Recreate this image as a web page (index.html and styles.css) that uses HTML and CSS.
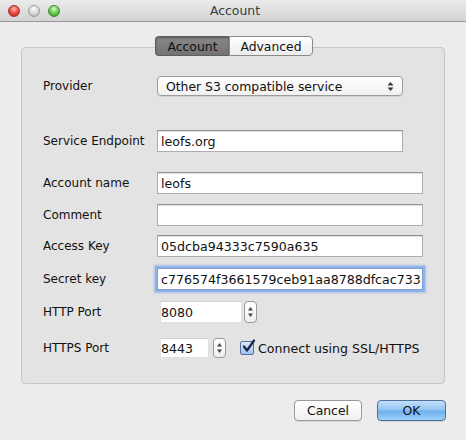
FILE: index.html
```html
<!DOCTYPE html>
<html>
<head>
<meta charset="utf-8">
<link rel="stylesheet" href="styles.css">
</head>
<body>
<div class="window">
  <div class="titlebar">
    <div class="lights">
      <span class="light red"></span>
      <span class="light gray"></span>
      <span class="light green"></span>
    </div>
    <div class="title">Account</div>
  </div>
  <div class="content">
    <div class="tabs">
      <div class="tab selected">Account</div>
      <div class="tab">Advanced</div>
    </div>
    <div class="group">
      <div class="row r-provider">
        <div class="label">Provider</div>
        <div class="popup">
          <span>Other S3 compatible service</span>
          <svg class="popup-arrows" width="7" height="11" viewBox="0 0 7 11"><path d="M3.5 1 L6.5 4.5 H0.5 Z M3.5 10 L6.5 6.5 H0.5 Z" fill="#3a3a3a"/></svg>
        </div>
      </div>
      <div class="row r-endpoint">
        <div class="label">Service Endpoint</div>
        <div class="field w246">leofs.org</div>
      </div>
      <div class="row r-account">
        <div class="label">Account name</div>
        <div class="field w266">leofs</div>
      </div>
      <div class="row r-comment">
        <div class="label">Comment</div>
        <div class="field w266"></div>
      </div>
      <div class="row r-access">
        <div class="label">Access Key</div>
        <div class="field w266">05dcba94333c7590a635</div>
      </div>
      <div class="row r-secret">
        <div class="label">Secret key</div>
        <div class="field w266 focus">c776574f3661579ceb91aa8788dfcac733</div>
      </div>
      <div class="row r-http">
        <div class="label">HTTP Port</div>
        <div class="port">
          <div class="field portfield w82">8080</div>
          <div class="stepper tall"><svg width="7" height="16" viewBox="0 0 7 16"><path d="M3.5 3 L6 6.5 H1 Z M3.5 13 L6 9.5 H1 Z" fill="#444"/></svg></div>
        </div>
      </div>
      <div class="row r-https">
        <div class="label">HTTPS Port</div>
        <div class="port">
          <div class="field portfield short w49">8443</div>
          <div class="stepper short-step"><svg width="7" height="16" viewBox="0 0 7 16"><path d="M3.5 3 L6 6.5 H1 Z M3.5 13 L6 9.5 H1 Z" fill="#444"/></svg></div>
          <div class="check">
            <span class="checkbox"><svg width="15" height="15" viewBox="0 0 15 15"><path d="M3 7.5 L6 11.5 L13 1.5" fill="none" stroke="#1c2448" stroke-width="2.2" stroke-linejoin="round" stroke-linecap="round"/></svg></span>
            <span class="check-label">Connect using SSL/HTTPS</span>
          </div>
        </div>
      </div>
    </div>
    <div class="buttons">
      <div class="btn">Cancel</div>
      <div class="btn default">OK</div>
    </div>
  </div>
</div>
</body>
</html>
```

FILE: styles.css
```css
html, body {
  margin: 0;
  padding: 0;
}
body {
  width: 466px;
  height: 440px;
  background: #ececec;
  font-family: "DejaVu Sans", "Liberation Sans", sans-serif;
  font-size: 12px;
  color: #111;
  overflow: hidden;
}
.window {
  width: 466px;
  height: 440px;
  background: #ececec;
  display: flex;
  flex-direction: column;
}
.titlebar {
  height: 21px;
  border-bottom: 1px solid #989898;
  background: linear-gradient(#ebebeb, #d3d3d3);
  display: flex;
  align-items: center;
  position: relative;
}
.lights {
  display: flex;
  gap: 8px;
  padding-left: 8px;
  padding-top: 1px;
}
.light {
  width: 12px;
  height: 12px;
  border-radius: 50%;
  box-sizing: border-box;
}
.light.red {
  background: radial-gradient(circle at 50% 30%, #ffb2a8 0, #e8423a 55%, #b8261f 100%);
  border: 1px solid #a5332c;
}
.light.gray {
  background: radial-gradient(circle at 50% 30%, #ffffff 0, #d6d6d6 55%, #a8a8a8 100%);
  border: 1px solid #9a9a9a;
}
.light.green {
  background: radial-gradient(circle at 50% 30%, #d6ffc4 0, #62c34c 55%, #348d25 100%);
  border: 1px solid #3f8a2f;
}
.title {
  flex: 1;
  text-align: center;
  color: #3c3c3c;
  font-size: 12.4px;
  margin-right: 52px;
  margin-left: -4px;
}
.content {
  padding: 0 21px 0 21px;
  display: flex;
  flex-direction: column;
}
.tabs {
  margin-top: 14px;
  display: flex;
  justify-content: center;
  position: relative;
  z-index: 1;
  margin-left: 2px;
}
.tab {
  height: 20px;
  box-sizing: border-box;
  border: 1px solid #8a8a8a;
  background: linear-gradient(#ffffff, #ececec);
  display: flex;
  align-items: center;
  justify-content: center;
  font-size: 12.4px;
  color: #111;
}
.tab:first-child {
  width: 74px;
  border-radius: 4px 0 0 4px;
  border-right: none;
}
.tab:last-child {
  width: 84px;
  border-radius: 0 4px 4px 0;
}
.tab.selected {
  background: linear-gradient(#878787, #737373);
  border-color: #5e5e5e;
  color: #111;
  box-shadow: inset 0 1px 2px rgba(0,0,0,0.35);
}
.group {
  margin-top: -9px;
  height: 337px;
  box-sizing: border-box;
  border: 1px solid #c6c6c6;
  border-radius: 4px;
  background: #e3e3e3;
  padding: 28px 0 0 21px;
  display: flex;
  flex-direction: column;
}
.row {
  display: flex;
  align-items: center;
}
.label {
  width: 114px;
  flex: none;
  color: #111;
}
.r-provider { height: 20px; }
.r-endpoint { margin-top: 34px; height: 22px; }
.r-account { margin-top: 20px; height: 22px; }
.r-comment { margin-top: 10px; height: 22px; }
.r-access { margin-top: 9px; height: 22px; }
.r-secret { margin-top: 11px; height: 22px; }
.r-http { margin-top: 11px; height: 22px; }
.r-https { margin-top: 15px; height: 20px; }

.popup {
  width: 246px;
  height: 20px;
  box-sizing: border-box;
  border: 1px solid #9c9c9c;
  border-radius: 4px;
  background: linear-gradient(#ffffff, #f1f1f1);
  box-shadow: 0 1px 0 rgba(0,0,0,0.08);
  display: flex;
  align-items: center;
  justify-content: space-between;
  padding: 0 8px 0 8px;
  color: #111;
  font-size: 12.4px;
}
.popup-arrows {
  flex: none;
}
.field {
  height: 22px;
  box-sizing: border-box;
  border: 1px solid #adadad;
  border-top-color: #8f8f8f;
  background: #fff;
  box-shadow: inset 0 1px 1px rgba(0,0,0,0.12);
  padding: 0 0 0 3px;
  display: flex;
  align-items: center;
  white-space: nowrap;
  overflow: hidden;
  color: #111;
  font-size: 12.6px;
}
.w246 { width: 246px; }
.w266 { width: 266px; }
.w82 { width: 82px; }
.w49 { width: 49px; }
.field.focus {
  border-color: #7d9fcf;
  box-shadow: 0 0 0 2px #8db3ea, 0 0 2px 3px rgba(120,160,220,0.5);
  padding-left: 3px;
}
.port {
  display: flex;
  align-items: center;
  margin-left: 3px;
}
.portfield {
  border-color: #e0e0e0;
  border-top-color: #d0d0d0;
  box-shadow: none;
  padding-left: 0;
}
.field.short {
  height: 20px;
}
.stepper {
  width: 13px;
  box-sizing: border-box;
  border: 1px solid #9a9a9a;
  border-radius: 4px;
  background: linear-gradient(#ffffff, #eeeeee);
  display: flex;
  align-items: center;
  justify-content: center;
}
.stepper.tall {
  height: 22px;
  margin-left: 2px;
}
.stepper.short-step {
  height: 20px;
  margin-left: 4px;
}
.check {
  display: flex;
  align-items: center;
  margin-left: 14px;
  gap: 4px;
}
.check-label {
  font-size: 12.6px;
}
.checkbox {
  width: 14px;
  height: 14px;
  box-sizing: border-box;
  border: 1px solid #5a6f9a;
  border-radius: 2px;
  background: linear-gradient(#dce9fb, #9dc2ee);
  position: relative;
  display: block;
}
.checkbox svg {
  position: absolute;
  left: 0;
  top: -3px;
}
.buttons {
  margin-top: 16px;
  display: flex;
  justify-content: flex-end;
  gap: 15px;
  margin-right: -1px;
}
.btn {
  height: 21px;
  box-sizing: border-box;
  border: 1px solid #9a9a9a;
  border-radius: 4px;
  background: linear-gradient(#ffffff, #f0f0f0);
  box-shadow: 0 1px 0 rgba(0,0,0,0.08);
  display: flex;
  align-items: center;
  justify-content: center;
  width: 68px;
  color: #111;
  font-size: 12.4px;
}
.btn.default {
  width: 69px;
  border-color: #4f6f9e;
  background: linear-gradient(#c4e0fb 0%, #94c5f2 45%, #6fb0ef 55%, #9fd0fa 100%);
}
```
